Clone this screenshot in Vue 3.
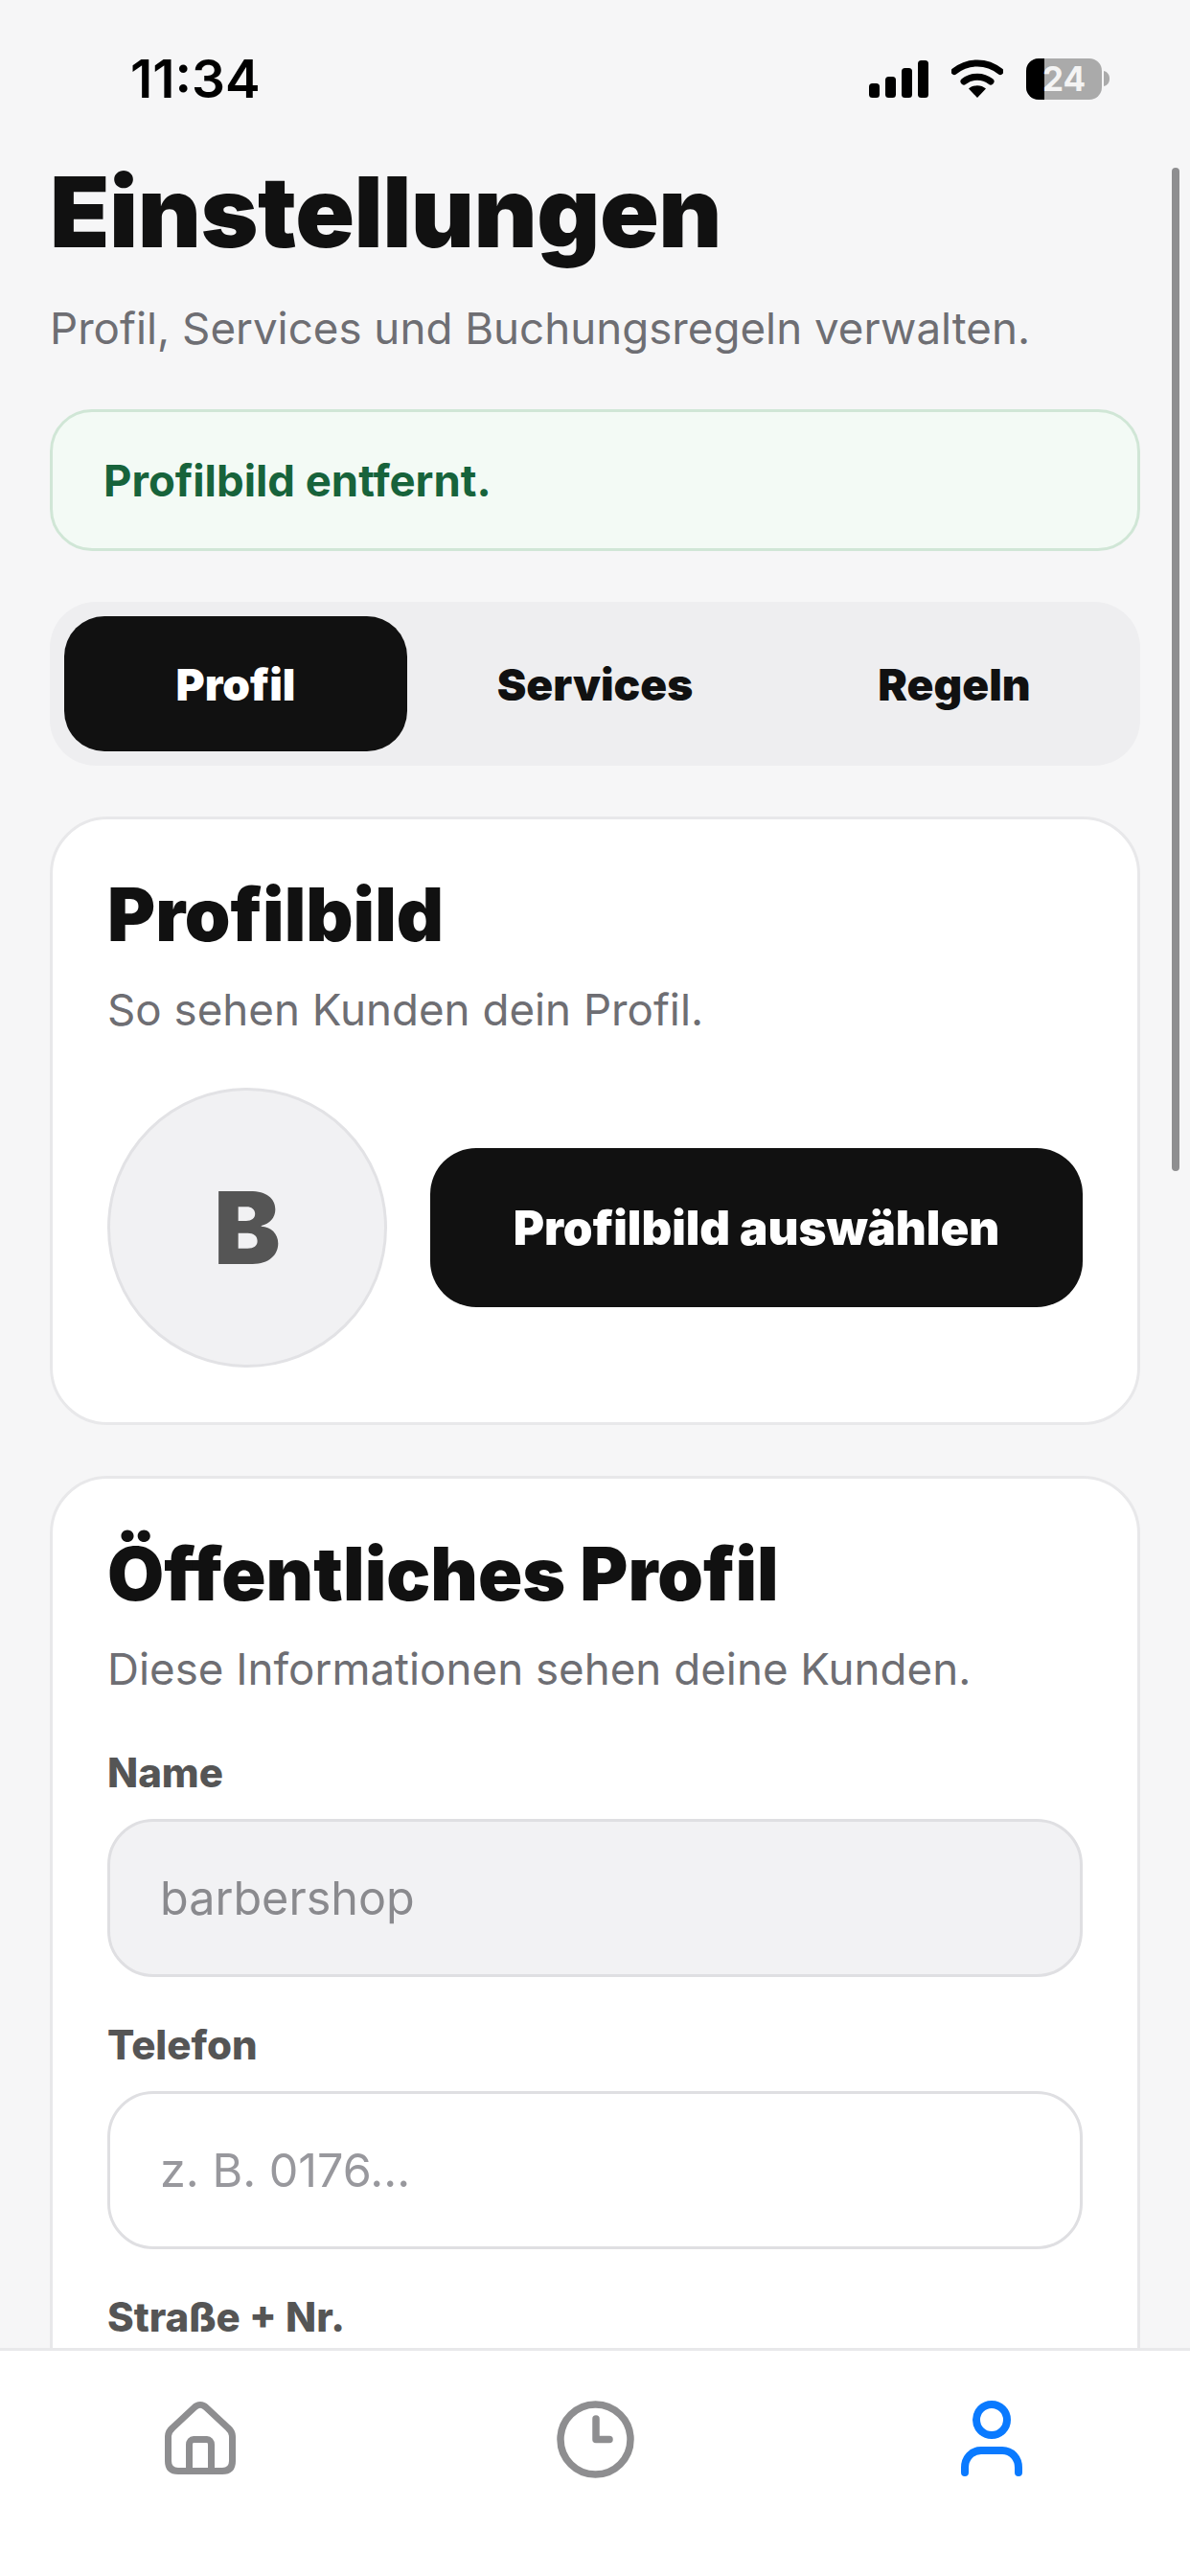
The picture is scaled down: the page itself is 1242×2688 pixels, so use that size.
<script setup>
const tabs = [
  { label: 'Profil', active: true },
  { label: 'Services', active: false },
  { label: 'Regeln', active: false },
]
const fields = [
  { label: 'Name', value: 'barbershop', filled: true },
  { label: 'Telefon', value: 'z. B. 0176...', filled: false },
  { label: 'Straße + Nr.', value: '', filled: false },
]
</script>

<template>
  <div class="screen">
    <div class="status">
      <span class="time">11:34</span>
      <div class="status-icons">
        <svg class="signal" width="62" height="39" viewBox="0 0 62 39" fill="#000">
          <rect x="0" y="24" width="11" height="15" rx="3.5" />
          <rect x="17" y="17" width="11" height="22" rx="3.5" />
          <rect x="34" y="8" width="11" height="31" rx="3.5" />
          <rect x="51" y="0" width="11" height="39" rx="3.5" />
        </svg>
        <svg class="wifi" width="54" height="40" viewBox="0 0 54 40">
          <path d="M3 12.500C17 1 37 1 51 12.500" fill="none" stroke="#000" stroke-width="7" stroke-linecap="round" />
          <path d="M13 23C21 16.500 33 16.500 41 23" fill="none" stroke="#000" stroke-width="7" stroke-linecap="round" />
          <path d="M18 30.500C23 26 31 26 36 30.500L27 40Z" fill="#000" />
        </svg>
        <div class="battery">
          <div class="batt-body">
            <div class="batt-fill"></div>
            <span class="batt-num">24</span>
          </div>
          <svg class="batt-cap" width="6" height="16" viewBox="0 0 6 16"><path d="M0 0C4 1 6 4 6 8C6 12 4 15 0 16Z" fill="#aaaaaa" /></svg>
        </div>
      </div>
    </div>

    <main class="content">
      <div class="scrollbar"></div>
      <h1 class="title">Einstellungen</h1>
      <p class="subtitle">Profil, Services und Buchungsregeln verwalten.</p>

      <div class="banner">Profilbild entfernt.</div>

      <div class="tabs">
        <div v-for="t in tabs" :key="t.label" class="tab" :class="{ active: t.active }">{{ t.label }}</div>
      </div>

      <section class="card">
        <h2 class="card-title">Profilbild</h2>
        <p class="card-sub">So sehen Kunden dein Profil.</p>
        <div class="avatar-row">
          <div class="avatar">B</div>
          <div class="pick">Profilbild auswählen</div>
        </div>
      </section>

      <section class="card">
        <h2 class="card-title">Öffentliches Profil</h2>
        <p class="card-sub">Diese Informationen sehen deine Kunden.</p>
        <div class="fields">
          <div v-for="f in fields" :key="f.label" class="field">
            <div class="label">{{ f.label }}</div>
            <div class="input" :class="{ filled: f.filled }">{{ f.value }}</div>
          </div>
        </div>
      </section>
    </main>

    <nav class="nav">
      <svg width="74" height="77" viewBox="0 0 74 77" fill="none" stroke="#8e8e90" stroke-width="7" stroke-linejoin="round" stroke-linecap="round">
        <path d="M3.500 38C3.500 33 5 31 8 28.500L31 7C34.500 3.500 39.500 3.500 43 7L66 28.500C69 31 70.500 33 70.500 38V63C70.500 70 67 73.500 60 73.500H14C7 73.500 3.500 70 3.500 63Z" />
        <path d="M25.500 73.500V46C25.500 42.500 27.500 40.500 30 40.500H44C46.500 40.500 48.500 42.500 48.500 46V73.500" />
      </svg>
      <svg width="81" height="81" viewBox="0 0 81 81" fill="none" stroke="#8e8e90" stroke-width="7.500" stroke-linecap="round" stroke-linejoin="round">
        <circle cx="40.500" cy="40.500" r="36.500" />
        <path d="M41 19V40.500H55" />
      </svg>
      <svg width="64" height="79" viewBox="0 0 64 79" fill="none" stroke="#0a7aff" stroke-width="8" stroke-linecap="round" stroke-linejoin="round">
        <circle cx="32" cy="20" r="16" />
        <path d="M4 75V70C4 60 11 52 21 52H43C53 52 60 60 60 70V75" />
      </svg>
    </nav>
  </div>
</template>

<style>
html, body { margin: 0; padding: 0; }
</style>

<style scoped>
.screen {
  width: 1242px;
  height: 2688px;
  background: #f6f6f7;
  display: flex;
  flex-direction: column;
  overflow: hidden;
  font-family: Inter, "Noto Sans", sans-serif;
  color: #111;
}
.status {
  flex: none;
  height: 160px;
  box-sizing: border-box;
  padding: 52px 84px 0 136px;
  display: flex;
  justify-content: space-between;
  align-items: flex-start;
}
.time {
  font-size: 55px;
  font-weight: 600;
  line-height: 60px;
  color: #000;
}
.status-icons {
  display: flex;
  align-items: center;
  gap: 24px;
  height: 60px;
}
.battery { display: flex; align-items: center; gap: 2px; }
.batt-body {
  position: relative;
  width: 79px;
  height: 43px;
  border-radius: 13px;
  background: #aaaaaa;
  overflow: hidden;
  display: flex;
  align-items: center;
  justify-content: center;
}
.batt-fill { position: absolute; left: 0; top: 0; bottom: 0; width: 19px; background: #000; }
.batt-num {
  position: relative;
  font-size: 35px;
  font-weight: 700;
  color: #f4f4f4;
  line-height: 1;
}
.content {
  flex: 1;
  min-height: 0;
  position: relative;
  padding: 0 52px;
  display: flex;
  flex-direction: column;
  overflow: hidden;
}
.scrollbar {
  position: absolute;
  right: 11px;
  top: 15px;
  width: 8px;
  height: 1047px;
  border-radius: 4px;
  background: #8e8e90;
}
.title {
  margin: 0;
  font-size: 102px;
  font-weight: 900;
  line-height: 122px;
  letter-spacing: -0.5px;
}
.subtitle {
  margin: 31px 0 0;
  font-size: 45.7px;
  line-height: 60px;
  color: #6e6e73;
}
.banner {
  margin-top: 54px;
  height: 148px;
  flex: none;
  box-sizing: border-box;
  border: 3px solid #d0e6d6;
  border-radius: 44px;
  background: #f3faf5;
  color: #17633b;
  font-size: 45.5px;
  font-weight: 700;
  padding: 0 53px;
  display: flex;
  align-items: center;
}
.tabs {
  margin-top: 53px;
  flex: none;
  height: 171px;
  box-sizing: border-box;
  padding: 15px;
  border-radius: 48px;
  background: #eeeef0;
  display: grid;
  grid-template-columns: repeat(3, 1fr);
  gap: 17px;
}
.tab {
  display: flex;
  align-items: center;
  justify-content: center;
  font-size: 46px;
  font-weight: 900;
  color: #111;
  border-radius: 42px;
}
.tab.active { background: #111; color: #fff; }
.card {
  flex: none;
  margin-top: 53px;
  box-sizing: border-box;
  background: #fff;
  border: 3px solid #e8e8ea;
  border-radius: 60px;
  padding: 57px 57px;
}
.card-title {
  margin: 0;
  font-size: 76.4px;
  font-weight: 900;
  line-height: 84px;
  color: #111;
}
.card-sub {
  margin: 28px 0 0;
  font-size: 45.7px;
  line-height: 60px;
  color: #6e6e73;
}
.avatar-row {
  margin-top: 51px;
  display: flex;
  align-items: center;
  gap: 45px;
}
.avatar {
  flex: none;
  width: 292px;
  height: 292px;
  box-sizing: border-box;
  border-radius: 50%;
  background: #f1f1f3;
  border: 3px solid #e2e2e5;
  color: #555;
  font-size: 104px;
  font-weight: 900;
  display: flex;
  align-items: center;
  justify-content: center;
}
.pick {
  flex: 1;
  height: 166px;
  border-radius: 48px;
  background: #111;
  color: #fff;
  font-size: 49.3px;
  font-weight: 900;
  display: flex;
  align-items: center;
  justify-content: center;
}
.fields { margin-top: 52px; display: flex; flex-direction: column; }
.field { margin-bottom: 45px; }
.label {
  font-size: 42px;
  font-weight: 800;
  line-height: 52px;
  color: #555;
}
.input {
  margin-top: 22px;
  height: 165px;
  box-sizing: border-box;
  border: 3px solid #dfdfe2;
  border-radius: 48px;
  background: #fff;
  color: #98989d;
  font-size: 48.5px;
  padding: 0 52px;
  display: flex;
  align-items: center;
}
.input.filled { background: #f2f2f4; color: #8a8a8e; }
.nav {
  flex: none;
  height: 238px;
  box-sizing: border-box;
  background: #fff;
  border-top: 3px solid #e8e8ea;
  padding: 52px 0 0 2px;
  display: grid;
  grid-template-columns: repeat(3, 1fr);
  justify-items: center;
  align-items: start;
}
</style>
